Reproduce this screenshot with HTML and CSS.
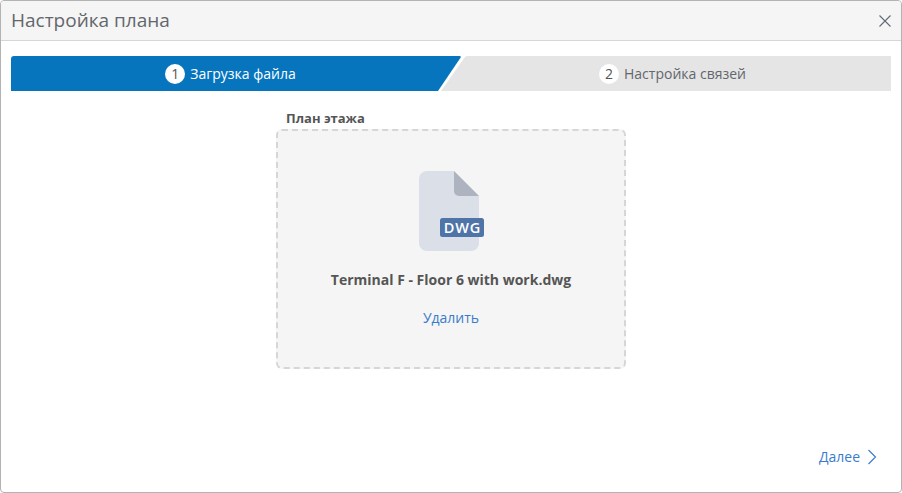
FILE: index.html
```html
<!DOCTYPE html>
<html lang="ru">
<head>
<meta charset="utf-8">
<title>Настройка плана</title>
<link rel="stylesheet" href="styles.css">
</head>
<body>
<div class="dialog">
  <header class="dialog-header">
    <h1 class="dialog-title">Настройка плана</h1>
    <button class="close-btn" aria-label="Закрыть">
      <svg class="close-icon" width="14" height="14" viewBox="0 0 14 14"><path d="M1.5 1.5 L12.5 12.5 M12.5 1.5 L1.5 12.5" fill="none" stroke="#5f6b78" stroke-width="1.1"/></svg>
    </button>
  </header>
  <div class="dialog-body">
    <div class="steps">
      <div class="step step-active"><span class="step-num">1</span><span>Загрузка файла</span></div>
      <div class="step step-next"><span class="step-num">2</span><span>Настройка связей</span></div>
    </div>
    <div class="upload">
      <div class="upload-label">План этажа</div>
      <div class="dropzone">
        <svg class="file-icon" width="66" height="80" viewBox="0 0 66 80">
          <path d="M8 0 H35 L60 25 V72 A8 8 0 0 1 52 80 H8 A8 8 0 0 1 0 72 V8 A8 8 0 0 1 8 0 Z" fill="#dbe0e8"/>
          <path d="M35 0 L60 25 H40 A5 5 0 0 1 35 20 Z" fill="#adb4bf"/>
          <rect x="21" y="47" width="44" height="19" rx="2.5" fill="#4f74a8"/>
          <text x="43.5" y="61.5" text-anchor="middle" class="file-ext">DWG</text>
        </svg>
        <div class="file-name">Terminal F - Floor 6 with work.dwg</div>
        <a class="link delete-link" href="#">Удалить</a>
      </div>
    </div>
    <div class="footer">
      <a class="link next-link" href="#">Далее
        <svg class="next-icon" width="10" height="16" viewBox="0 0 10 16"><path d="M1.5 1 L8.5 8 L1.5 15" fill="none" stroke="#3a7ccb" stroke-width="1.15"/></svg>
      </a>
    </div>
  </div>
</div>
</body>
</html>
```
FILE: styles.css
```css
* { box-sizing: border-box; }
html, body { margin: 0; height: 100%; }
body {
  width: 902px;
  height: 493px;
  overflow: hidden;
  background: #fff;
  font-family: "Open Sans", "Liberation Sans", sans-serif;
  color: #555;
}
.dialog {
  width: 902px;
  height: 493px;
  border: 1px solid #b3b3b3;
  border-radius: 4px;
  background: #fff;
  display: flex;
  flex-direction: column;
  overflow: hidden;
}
.dialog-header {
  height: 40px;
  flex: none;
  background: #f5f5f5;
  border-bottom: 1px solid #d6d6d6;
  display: flex;
  align-items: center;
  justify-content: space-between;
  padding: 0 9px 2px 10px;
}
.dialog-title {
  margin: 0;
  font-size: 19px;
  font-weight: 400;
  color: #63676c;
}
.close-btn {
  border: 0;
  padding: 0;
  background: none;
  display: flex;
  margin-top: 2px;
}
.dialog-body {
  flex: 1;
  display: flex;
  flex-direction: column;
  padding: 15px 10px 0;
}
.steps {
  display: flex;
  height: 35px;
  flex: none;
  font-size: 14px;
}
.step {
  display: flex;
  align-items: center;
  justify-content: center;
  gap: 5px;
}
.step-active {
  flex: 0 0 450px;
  padding-right: 11px;
  background: #0675bd;
  color: #fff;
  border-radius: 3px 0 0 0;
  clip-path: polygon(0 0, 449px 0, 450px 1px, 427px 100%, 0 100%);
}
.step-next {
  flex: 1;
  margin-left: -20px;
  padding-left: 13px;
  background: #e5e5e5;
  color: #63676c;
  clip-path: polygon(26px 0, 100% 0, 100% 100%, 0 100%, 22.5px 3px, 24px 0.8px);
}
.step-num {
  width: 20px;
  height: 20px;
  border-radius: 50%;
  background: #fff;
  color: #555;
  display: flex;
  align-items: center;
  justify-content: center;
  font-size: 14px;
}
.upload {
  width: 350px;
  margin: 18px auto 0;
}
.upload-label {
  font-size: 13px;
  font-weight: 700;
  line-height: 18px;
  padding-left: 10px;
  color: #555;
}
.dropzone {
  height: 240px;
  margin-top: 2px;
  background: #f5f5f5;
  border: 2px dashed #d6d6d6;
  border-radius: 6px;
  display: flex;
  flex-direction: column;
  align-items: center;
  padding-top: 40px;
}
.file-icon { flex: none; margin-left: 2px; }
.file-ext {
  font-family: "Open Sans", sans-serif;
  font-size: 14.5px;
  font-weight: 600;
  letter-spacing: 0.8px;
  fill: #fff;
}
.file-name {
  margin-top: 19px;
  font-size: 14px;
  font-weight: 700;
  line-height: 20px;
  color: #555;
}
.link {
  color: #3a7ccb;
  text-decoration: none;
  font-size: 14px;
}
.delete-link { margin-top: 18px; line-height: 20px; }
.footer {
  margin-top: auto;
  display: flex;
  justify-content: flex-end;
  padding: 0 14px 25px 0;
}
.next-link {
  display: flex;
  align-items: center;
  gap: 7px;
  line-height: 20px;
}
```
